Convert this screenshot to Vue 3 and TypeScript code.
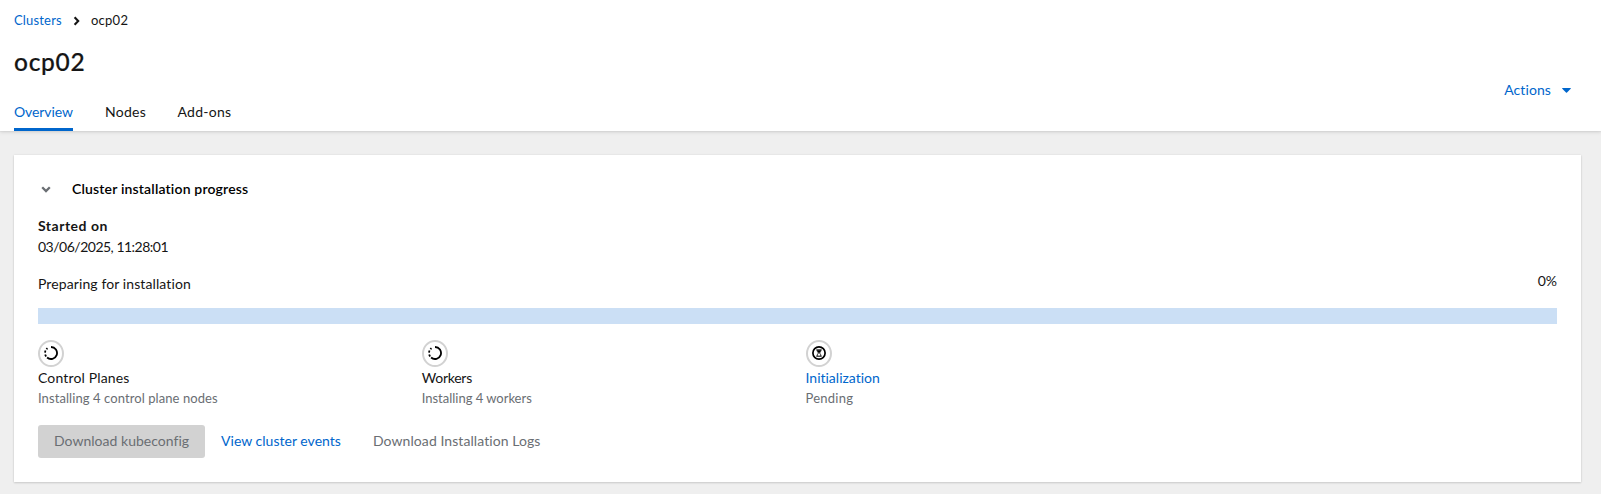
<script setup lang="ts">
import { ref } from 'vue'

interface Tab { id: string; label: string }
interface Step { id: string; title: string; detail: string; state: 'progress' | 'pending' }

const tabs: Tab[] = [
  { id: 'overview', label: 'Overview' },
  { id: 'nodes', label: 'Nodes' },
  { id: 'addons', label: 'Add-ons' },
]
const activeTab = ref('overview')
const expanded = ref(true)

const steps: Step[] = [
  { id: 'control', title: 'Control Planes', detail: 'Installing 4 control plane nodes', state: 'progress' },
  { id: 'workers', title: 'Workers', detail: 'Installing 4 workers', state: 'progress' },
  { id: 'init', title: 'Initialization', detail: 'Pending', state: 'pending' },
]
</script>

<template>
  <div class="page">
    <header class="header">
      <nav class="breadcrumb">
        <a class="crumb-link">Clusters</a>
        <svg class="crumb-sep" width="8" height="10" viewBox="0 0 8 10"><path d="M1.6 1.3 5.2 5 1.6 8.7" fill="none" stroke="#151515" stroke-width="2.1" /></svg>
        <span class="crumb-current">ocp02</span>
      </nav>
      <h1 class="title">ocp02</h1>
      <div class="bar">
        <nav class="tabs">
          <button v-for="tab in tabs" :key="tab.id" class="tab" :class="[tab.id, { active: tab.id === activeTab }]" @click="activeTab = tab.id">{{ tab.label }}</button>
        </nav>
        <button class="actions">
          <span>Actions</span>
          <svg width="9" height="5" viewBox="0 0 9 5"><path d="M.6 0h7.8q.8 0 .3.7L5 4.6q-.5.5-1 0L.3.7Q-.2 0 .6 0z" fill="#06c" /></svg>
        </button>
      </div>
    </header>

    <main class="body">
      <section class="card">
        <div class="card-head" @click="expanded = !expanded">
          <svg class="chevron" width="10" height="7" viewBox="0 0 10 7"><path d="M1.2 1.2 5 5l3.8-3.8" fill="none" stroke="#6a6e73" stroke-width="2.3" /></svg>
          <h2>Cluster installation progress</h2>
        </div>
        <template v-if="expanded">
          <dl class="started">
            <dt>Started on</dt>
            <dd>03/06/2025, 11:28:01</dd>
          </dl>
          <div class="progress-head">
            <span class="progress-label">Preparing for installation</span>
            <span class="percent">0%</span>
          </div>
          <div class="track"></div>
          <div class="steps">
            <div v-for="step in steps" :key="step.id" class="step" :class="step.id">
              <span class="badge">
                <svg v-if="step.state === 'progress'" width="14" height="14" viewBox="0 0 14 14" fill="none" stroke="#000" stroke-width="1.8">
                  <path d="M7 1a6 6 0 1 1-3.9 10.55" />
                  <path d="M2.2 10.5a6 6 0 0 1-1-2M1.05 6.6a6 6 0 0 1 .5-2.1M2.4 3.2a6 6 0 0 1 1.1-1" />
                </svg>
                <svg v-else width="14" height="14" viewBox="0 0 14 14" fill="none" stroke="#000">
                  <circle cx="7" cy="7" r="6.1" stroke-width="1.7" />
                  <path d="M4.3 3.9h5.4M4.3 10.2h5.4" stroke-width="1" />
                  <path d="M5.1 4.2Q5.2 6 6.5 7 5.2 8 5.1 10M8.9 4.2Q8.8 6 7.5 7 8.8 8 8.9 10" stroke-width=".8" />
                  <path d="M5 4.3h4L7.6 6.8H6.4z" fill="#000" stroke="none" />
                </svg>
              </span>
              <div class="step-title">{{ step.title }}</div>
              <div class="step-detail">{{ step.detail }}</div>
            </div>
          </div>
          <div class="buttons">
            <button class="kubeconfig" disabled>Download kubeconfig</button>
            <button class="events">View cluster events</button>
            <button class="logs" disabled>Download Installation Logs</button>
          </div>
        </template>
      </section>
    </main>
  </div>
</template>

<style>
body { background: #efefef; }
</style>

<style scoped>
.page {
  box-sizing: border-box;
  height: 494px;
  overflow: hidden;
  background: #efefef;
  color: #151515;
  font: 14px/21px Lato, "Open Sans", sans-serif;
  font-variant-ligatures: none;
}
button { border: 0; background: none; font: inherit; color: inherit; text-align: left; white-space: nowrap; }
h1, h2, dl, dd { margin: 0; }
.header {
  box-sizing: border-box;
  height: 131px;
  padding: 10px 30.5px 0 14px;
  background: #fff;
  box-shadow: 0 1px 1px rgba(3, 3, 3, .03), 0 1px 4px rgba(3, 3, 3, .13);
}
.breadcrumb { display: flex; align-items: center; height: 20px; font-size: 13px; line-height: 20px; }
.crumb-link { width: 48px; color: #06c; letter-spacing: .17px; }
.crumb-sep { margin: 1px 17px 0 11px; }
.crumb-current { margin-left: -7px; letter-spacing: .25px; }
.title { margin-top: 16px; height: 31px; font-size: 24.5px; line-height: 31px; font-weight: 500; letter-spacing: .7px; -webkit-text-stroke: .2px #151515; }
.bar { display: flex; justify-content: space-between; margin-top: 3px; height: 51px; }
.tabs { display: flex; gap: 32px; align-items: flex-end; }
.tab { padding: 0 0 6px; height: 30px; border-bottom: 3px solid transparent; letter-spacing: .25px; }
.tab.overview { width: 59px; letter-spacing: -.1px; }
.tab.nodes { width: 40.5px; }
.tab.active { color: #06c; border-color: #06c; }
.actions { display: flex; align-items: center; gap: 10.5px; height: 21px; margin-top: -1px; padding: 0; color: #06c; letter-spacing: .1px; }
.actions svg { margin-top: 1px; }
.body { padding: 24px 20px 0 14px; }
.card {
  box-sizing: border-box;
  height: 327px;
  padding: 23px 24px 24px;
  background: #fff;
  box-shadow: 0 1px 2px rgba(3, 3, 3, .14), 0 0 2px rgba(3, 3, 3, .08);
}
.card-head { display: flex; align-items: center; height: 21px; padding-left: 2.5px; }
.chevron { margin-top: 2px; }
.card-head h2 { margin-left: 21.5px; font-size: 14px; line-height: 21px; font-weight: 600; color: #000; letter-spacing: .17px; }
.started { margin-top: 16px; }
.started dt { font-weight: 700; letter-spacing: .5px; }
.started dd { letter-spacing: -.5px; }
.progress-head { display: flex; justify-content: space-between; height: 38px; padding-top: 13px; box-sizing: border-box; }
.progress-label { margin-top: 3px; letter-spacing: .1px; }
.track { margin-top: 13px; height: 16px; background: #cbdff5; }
.steps { display: flex; margin-top: 16px; }
.step { width: 383.75px; }
.badge { display: flex; align-items: center; justify-content: center; box-sizing: border-box; width: 26px; height: 27px; padding-bottom: 1px; border: 2px solid #d2d2d2; border-radius: 50%; }
.step-title { letter-spacing: .15px; }
.workers .step-title { letter-spacing: -.25px; }
.init .step-title { color: #06c; letter-spacing: 0; }
.step-detail { color: #6a6e73; font-size: 13px; line-height: 20px; letter-spacing: .08px; }
.workers .step-detail { letter-spacing: -.02px; }
.init .step-detail { letter-spacing: .25px; }
.buttons { display: flex; margin-top: 17px; }
.buttons button { height: 33px; padding: 5px 16px 7px; }
.buttons .kubeconfig { width: 167px; border-radius: 3px; background: #d2d2d2; color: #6a6e73; letter-spacing: .02px; }
.buttons .events { width: 152px; color: #06c; letter-spacing: .02px; }
.buttons .logs { color: #6a6e73; letter-spacing: .07px; }
</style>
